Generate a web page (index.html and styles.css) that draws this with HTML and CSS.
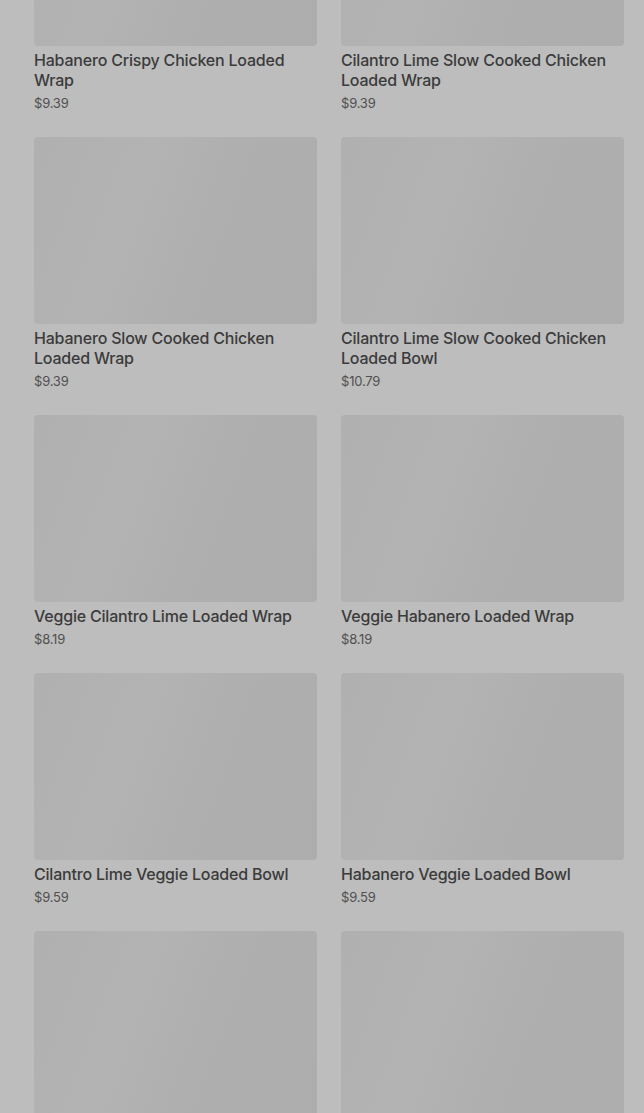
FILE: index.html
```html
<!DOCTYPE html>
<html lang="en">
<head>
    <meta charset="UTF-8">
    <meta name="viewport" content="width=device-width, initial-scale=1.0">
    <title>Menu</title>
    <link rel="stylesheet" href="styles.css">
</head>
<body>

    <div class="menu">
        <div class="grid">
            <div class="item">
                <div class="thumb"></div>
                <p class="name">Habanero Crispy Chicken Loaded Wrap</p>
                <p class="price">$9.39</p>
            </div>
            <div class="item">
                <div class="thumb"></div>
                <p class="name">Cilantro Lime Slow Cooked Chicken Loaded Wrap</p>
                <p class="price">$9.39</p>
            </div>

            <div class="item">
                <div class="thumb"></div>
                <p class="name">Habanero Slow Cooked Chicken Loaded Wrap</p>
                <p class="price">$9.39</p>
            </div>
            <div class="item">
                <div class="thumb"></div>
                <p class="name">Cilantro Lime Slow Cooked Chicken Loaded Bowl</p>
                <p class="price">$10.79</p>
            </div>

            <div class="item">
                <div class="thumb"></div>
                <p class="name">Veggie Cilantro Lime Loaded Wrap</p>
                <p class="price">$8.19</p>
            </div>
            <div class="item">
                <div class="thumb"></div>
                <p class="name">Veggie Habanero Loaded Wrap</p>
                <p class="price">$8.19</p>
            </div>

            <div class="item">
                <div class="thumb"></div>
                <p class="name">Cilantro Lime Veggie Loaded Bowl</p>
                <p class="price">$9.59</p>
            </div>
            <div class="item">
                <div class="thumb"></div>
                <p class="name">Habanero Veggie Loaded Bowl</p>
                <p class="price">$9.59</p>
            </div>

            <!-- next row, still loading -->
            <div class="item">
                <div class="thumb"></div>
            </div>
            <div class="item">
                <div class="thumb"></div>
            </div>
        </div>
    </div>

</body>
</html>
```

FILE: styles.css
```css
body {
    font-family: Inter, "Noto Sans", sans-serif;
    background-color: #bdbdbd;
    margin: 0;
    padding: 0;
    overflow: hidden;
}
.menu {
    padding: 0 20px 0 34px;
    height: 1113px;
    overflow: hidden;
}
.grid {
    display: grid;
    grid-template-columns: 1fr 1fr;
    column-gap: 24px;
    row-gap: 25px;
    margin-top: -141px;
}
.thumb {
    height: 187px;
    border-radius: 4px;
    background: linear-gradient(110deg, #b0b0b0 0%, #b3b3b3 35%, #afafaf 60%, #adadad 100%);
}
.name {
    margin: 4px 0 0;
    font-size: 16px;
    line-height: 20px;
    font-weight: 500;
    color: #3b3b3b;
    letter-spacing: -0.2px;
}
.price {
    margin: 4px 0 0;
    font-size: 13px;
    line-height: 18px;
    color: #505050;
    letter-spacing: -0.2px;
}
```
